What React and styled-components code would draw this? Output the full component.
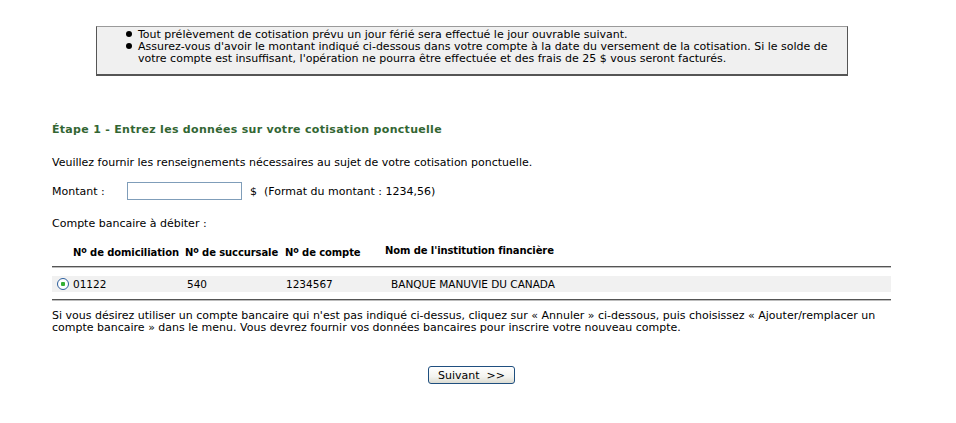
import React from "react";
import styled, { createGlobalStyle } from "styled-components";

const Global = createGlobalStyle`
  html, body { margin: 0; padding: 0; background: #fff; }
  body { font-family: "DejaVu Sans", Verdana, sans-serif; font-size: 11px; color: #000; }
`;

const Page = styled.div`
  width: 956px;
  height: 423px;
  padding-top: 26px;
  box-sizing: border-box;
  overflow: hidden;
`;

const NoteBox = styled.div`
  margin-left: 96px;
  width: 752px;
  height: 50px;
  box-sizing: border-box;
  background: #f0f0f0;
  border: 1px solid #9a9a9a;
  border-right-color: #555;
  border-bottom: 2px solid #555;
  border-left-color: #555;
  padding: 2px 8px 0 0;
`;

const BulletList = styled.ul`
  margin: 0;
  padding: 0 0 0 41px;
  list-style: none;
`;

const Bullet = styled.li`
  position: relative;
  line-height: 12px;
  &::before {
    content: "";
    position: absolute;
    left: -12px;
    top: 2px;
    width: 6px;
    height: 6px;
    border-radius: 50%;
    background: #000;
  }
`;

const Content = styled.div`
  margin: 0 65px 0 52px;
`;

const Heading = styled.h2`
  margin: 48px 0 0;
  font-size: 11px;
  font-weight: bold;
  letter-spacing: 0.3px;
  color: #336633;
  line-height: 12px;
`;

const Para = styled.p`
  margin: ${(p) => p.$top || 0}px 0 0;
  line-height: 12px;
`;

const AmountRow = styled.div`
  display: flex;
  align-items: center;
  margin-top: 13px;
  height: 18px;
`;

const Label = styled.span`
  width: 75px;
`;

const AmountInput = styled.input`
  width: 115px;
  height: 18px;
  box-sizing: border-box;
  border: 1px solid #7f9db9;
  margin: 0 8px 0 0;
  padding: 0 2px;
  font: inherit;
`;

const Hint = styled.span`
  white-space: pre;
`;

const Grid = styled.div`
  display: grid;
  grid-template-columns: 21px 112px 100px 100px 1fr;
  align-items: center;
`;

const HeadRow = styled(Grid)`
  margin-top: 15px;
  height: 14px;
  font-size: 10px;
  font-weight: bold;
  letter-spacing: -0.1px;
`;

const HeadCell = styled.div`
  white-space: nowrap;
  margin-top: ${(p) => (p.$up ? "-4px" : "0")};
`;

const Sup = styled.sup`
  font-size: 8px;
  vertical-align: 3px;
  line-height: 0;
`;

const Rule = styled.div`
  height: 0;
  border-top: 1px solid #555;
  border-bottom: 1px solid #bdbdbd;
  margin-top: ${(p) => p.$top}px;
`;

const DataRow = styled(Grid)`
  margin-top: 8px;
  height: 16px;
  background: #f1f1f1;
  font-size: 10.5px;
`;

const Cell = styled.div`
  padding-left: ${(p) => p.$pad || 0}px;
  white-space: nowrap;
`;

const Radio = styled.span`
  display: block;
  margin-left: 5px;
  width: 12px;
  height: 12px;
  box-sizing: border-box;
  border-radius: 50%;
  border: 1px solid #2c5e9c;
  background: radial-gradient(circle, #35b035 0 2px, #fff 2.5px);
`;

const ButtonRow = styled.div`
  display: flex;
  justify-content: center;
  margin-top: 32px;
`;

const Button = styled.button`
  width: 87px;
  height: 18px;
  padding: 0;
  border: 1px solid #1f4f7f;
  border-radius: 3px;
  background: linear-gradient(#ffffff, #f3f3ef 60%, #dcdcd2);
  font-family: "DejaVu Sans", Verdana, sans-serif;
  font-size: 11px;
  color: #000;
  white-space: pre;
`;

export default function App() {
  return (
    <>
      <Global />
      <Page>
        <NoteBox>
          <BulletList>
            <Bullet>Tout prélèvement de cotisation prévu un jour férié sera effectué le jour ouvrable suivant.</Bullet>
            <Bullet>
              Assurez-vous d'avoir le montant indiqué ci-dessous dans votre compte à la date du versement de la cotisation. Si le solde de votre compte est insuffisant, l'opération ne pourra être effectuée et des frais de 25 $ vous seront facturés.
            </Bullet>
          </BulletList>
        </NoteBox>
        <Content>
          <Heading>Étape 1 - Entrez les données sur votre cotisation ponctuelle</Heading>
          <Para $top={21}>Veuillez fournir les renseignements nécessaires au sujet de votre cotisation ponctuelle.</Para>
          <AmountRow>
            <Label>Montant :</Label>
            <AmountInput type="text" />
            <Hint>$  (Format du montant : 1234,56)</Hint>
          </AmountRow>
          <Para $top={18}>Compte bancaire à débiter :</Para>
          <HeadRow>
            <span />
            <HeadCell>N<Sup>o</Sup> de domiciliation</HeadCell>
            <HeadCell>N<Sup>o</Sup> de succursale</HeadCell>
            <HeadCell>N<Sup>o</Sup> de compte</HeadCell>
            <HeadCell $up>Nom de l'institution financière</HeadCell>
          </HeadRow>
          <Rule $top={7} />
          <DataRow>
            <Radio />
            <Cell>01122</Cell>
            <Cell $pad={2}>540</Cell>
            <Cell $pad={1}>1234567</Cell>
            <Cell $pad={6}>BANQUE MANUVIE DU CANADA</Cell>
          </DataRow>
          <Rule $top={7} />
          <Para $top={9}>
            Si vous désirez utiliser un compte bancaire qui n'est pas indiqué ci-dessus, cliquez sur « Annuler » ci-dessous, puis choisissez « Ajouter/remplacer un compte bancaire » dans le menu. Vous devrez fournir vos données bancaires pour inscrire votre nouveau compte.
          </Para>
          <ButtonRow>
            <Button type="button">{"Suivant  >>"}</Button>
          </ButtonRow>
        </Content>
      </Page>
    </>
  );
}
